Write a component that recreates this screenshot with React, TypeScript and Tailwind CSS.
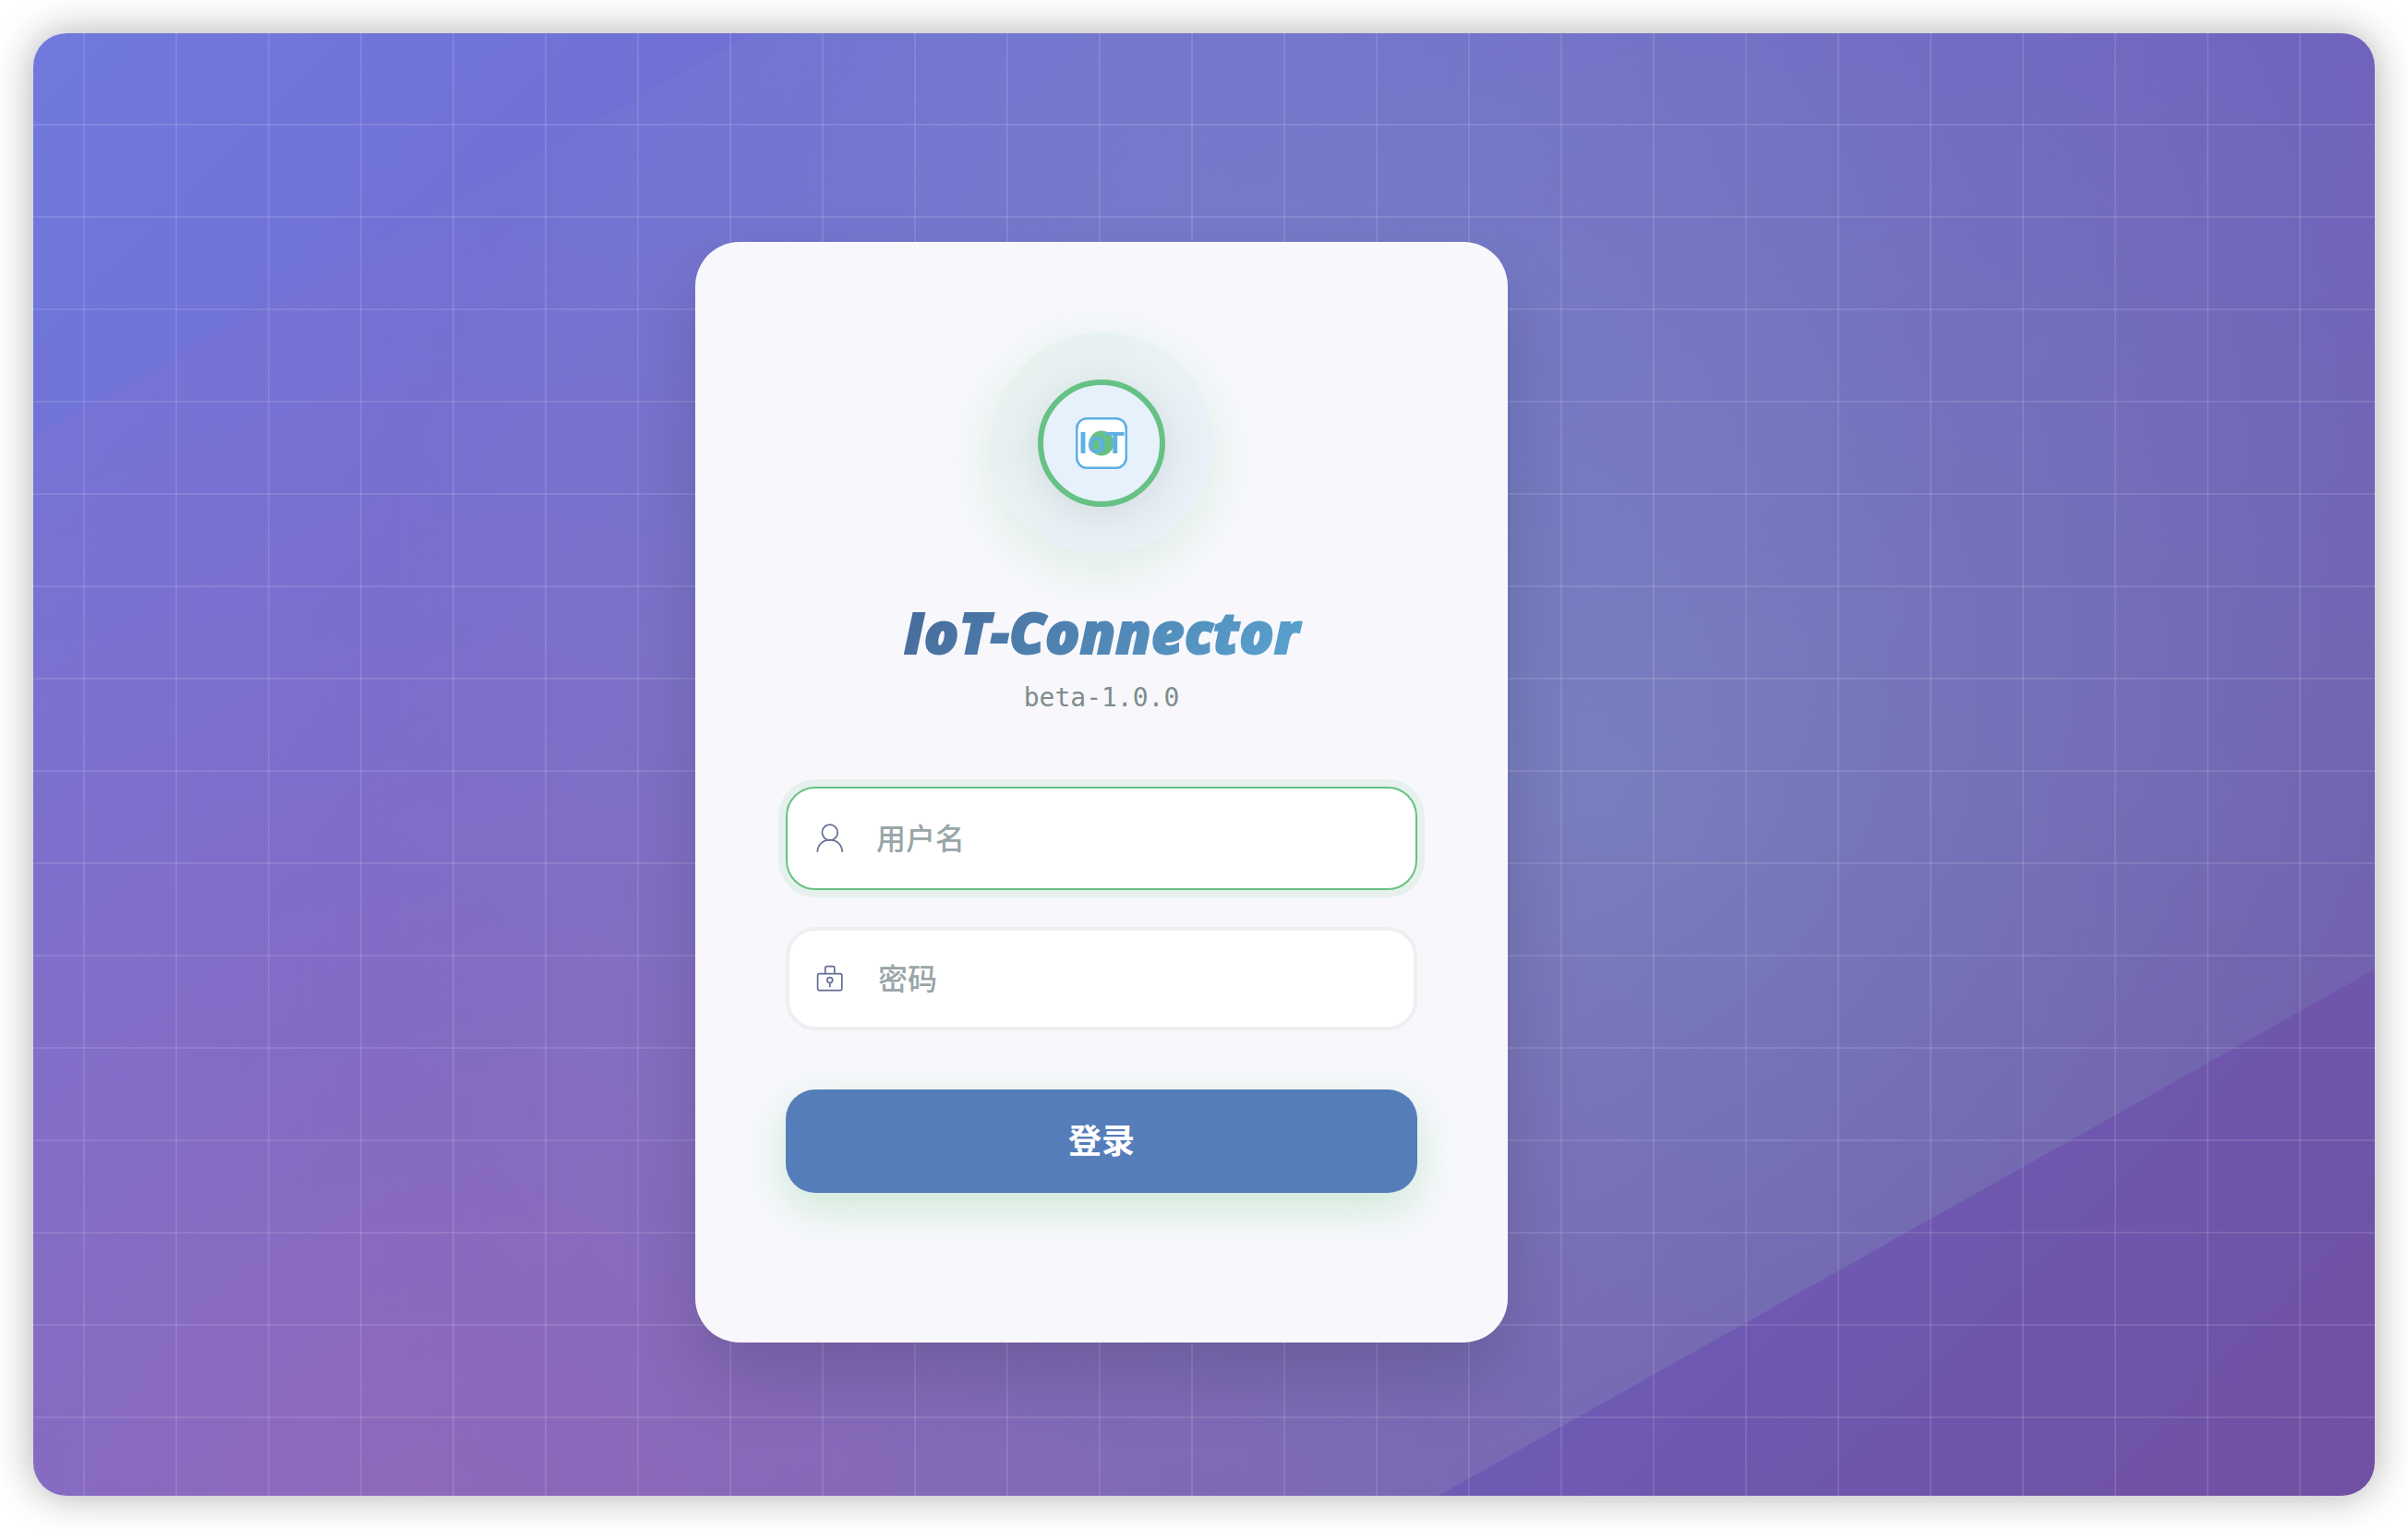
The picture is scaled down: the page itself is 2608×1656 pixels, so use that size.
import React from "react";

function Logo() {
  return (
    <div className="flex size-60 items-center justify-center rounded-full bg-[linear-gradient(135deg,rgba(103,194,130,0.11),rgba(90,170,235,0.09))] shadow-[0_16px_64px_rgba(103,194,130,0.2)]">
      <div className="flex size-[138px] items-center justify-center rounded-full border-[6px] border-[#66c184] bg-[#e6f1fc] shadow-[0_8px_48px_rgba(0,0,0,0.1)]">
        <svg viewBox="0 0 56 56" className="size-14" role="img" aria-label="IoT">
          <rect x="1.2" y="1.2" width="53.6" height="53.6" rx="11" fill="#fff" stroke="#5eb0e2" strokeWidth="2.6" />
          <circle cx="28" cy="28" r="13.4" fill="#66c184" />
          <text
            x="28"
            y="39"
            textAnchor="middle"
            fontSize="33"
            fontWeight="700"
            fill="#5eb0e2"
            fontFamily='"Liberation Sans", Arial, sans-serif'
          >
            IoT
          </text>
        </svg>
      </div>
    </div>
  );
}

function UserIcon() {
  return (
    <svg viewBox="0 0 32 32" className="size-8 shrink-0" fill="none" stroke="#616d92" strokeWidth="1.7" aria-hidden="true">
      <circle cx="15.8" cy="9.6" r="8.4" />
      <path d="M2.3 30.8 C2.6 22.6 8.8 17.6 15.8 17.6 S29 22.6 29.3 30.8" />
    </svg>
  );
}

function LockIcon() {
  return (
    <svg viewBox="0 0 32 32" className="size-8 shrink-0" fill="none" stroke="#616d92" strokeWidth="1.7" aria-hidden="true">
      <rect x="2.6" y="10.6" width="26.2" height="18" rx="1.6" />
      <path d="M10.8 10.6 V4.2 a1.6 1.6 0 0 1 1.6 -1.6 h6.8 a1.6 1.6 0 0 1 1.6 1.6 V10.6" />
      <circle cx="15.8" cy="17.6" r="2.9" />
      <path d="M15.8 20.5 V25.2" />
    </svg>
  );
}

export default function App() {
  return (
    <div className="flex min-h-screen bg-white p-9 font-['Noto_Sans','Noto_Sans_CJK_SC',sans-serif]">
      <main className="relative isolate flex flex-1 items-center justify-center overflow-clip rounded-[36px] bg-[linear-gradient(135deg,#7179dd_0%,#6f68cc_35%,#6e5ab4_75%,#7050a2_100%)] pt-[60px] pr-[222px] shadow-[0_0_44px_rgba(0,0,0,0.32)]">
        <div
          aria-hidden="true"
          className="absolute inset-0 -z-10 bg-[radial-gradient(circle_at_16%_102%,rgba(222,120,165,0.29),rgba(222,120,165,0)_1500px),radial-gradient(circle_at_48%_8%,rgba(145,196,190,0.07),rgba(145,196,190,0)_900px),radial-gradient(circle_at_67%_52%,rgba(145,206,195,0.28),rgba(145,206,195,0.13)_720px,rgba(145,206,195,0)_1350px)] [clip-path:polygon(0_27.6%,30.7%_0,100%_0,100%_64%,60%_100%,0_100%)]"
        />
        <div
          aria-hidden="true"
          className="absolute inset-0 -z-10 bg-[linear-gradient(rgba(255,255,255,0.11)_2px,transparent_2px),linear-gradient(90deg,rgba(255,255,255,0.11)_2px,transparent_2px)] bg-[size:100px_100px] bg-[position:54px_98px]"
        />
        <section className="flex w-[880px] flex-col items-center rounded-[48px] border-2 border-white/20 bg-[#f8f8fc] bg-clip-border px-24 pt-24 pb-40 shadow-[0_40px_80px_rgba(0,0,0,0.15)]">
          <Logo />
          <h1 className="mt-11 bg-[linear-gradient(135deg,#466797,#5aa5d2)] bg-clip-text px-2 font-['Open_Sans',sans-serif] text-[62px] leading-20 font-extrabold text-transparent italic [-webkit-text-stroke:2px_transparent]">
            IoT-Connector
          </h1>
          <p className="mt-3 font-['DejaVu_Sans_Mono',monospace] text-[28px] leading-10 text-[#7f8c8d]">beta-1.0.0</p>
          <form className="mt-[76px] flex w-full flex-col" onSubmit={(e) => e.preventDefault()}>
            <label className="flex h-28 items-center rounded-[32px] border-2 border-[#66c184] bg-white pl-[30px] shadow-[0_0_0_8px_rgba(103,194,130,0.12)]">
              <UserIcon />
              <input
                type="text"
                aria-label="用户名"
                placeholder="用户名"
                className="ml-[34px] h-full min-w-0 flex-1 rounded-r-[30px] bg-transparent pb-0.5 text-[32px] font-medium text-[#2c3e50] outline-none placeholder:text-[#99a5a7]"
              />
            </label>
            <label className="mt-10 flex h-28 items-center rounded-[32px] border-4 border-[#ecf0f1] bg-white pl-7">
              <LockIcon />
              <input
                type="password"
                aria-label="密码"
                placeholder="密码"
                className="ml-9 h-full min-w-0 flex-1 rounded-r-[28px] bg-transparent pb-0.5 text-[32px] font-medium text-[#2c3e50] outline-none placeholder:text-[#99a5a7]"
              />
            </label>
            <button
              type="submit"
              className="mt-16 h-28 rounded-[32px] bg-[#557db9] text-[36px] leading-12 font-bold text-white shadow-[0_16px_48px_rgba(103,194,130,0.3)]"
            >
              登录
            </button>
          </form>
        </section>
      </main>
    </div>
  );
}
